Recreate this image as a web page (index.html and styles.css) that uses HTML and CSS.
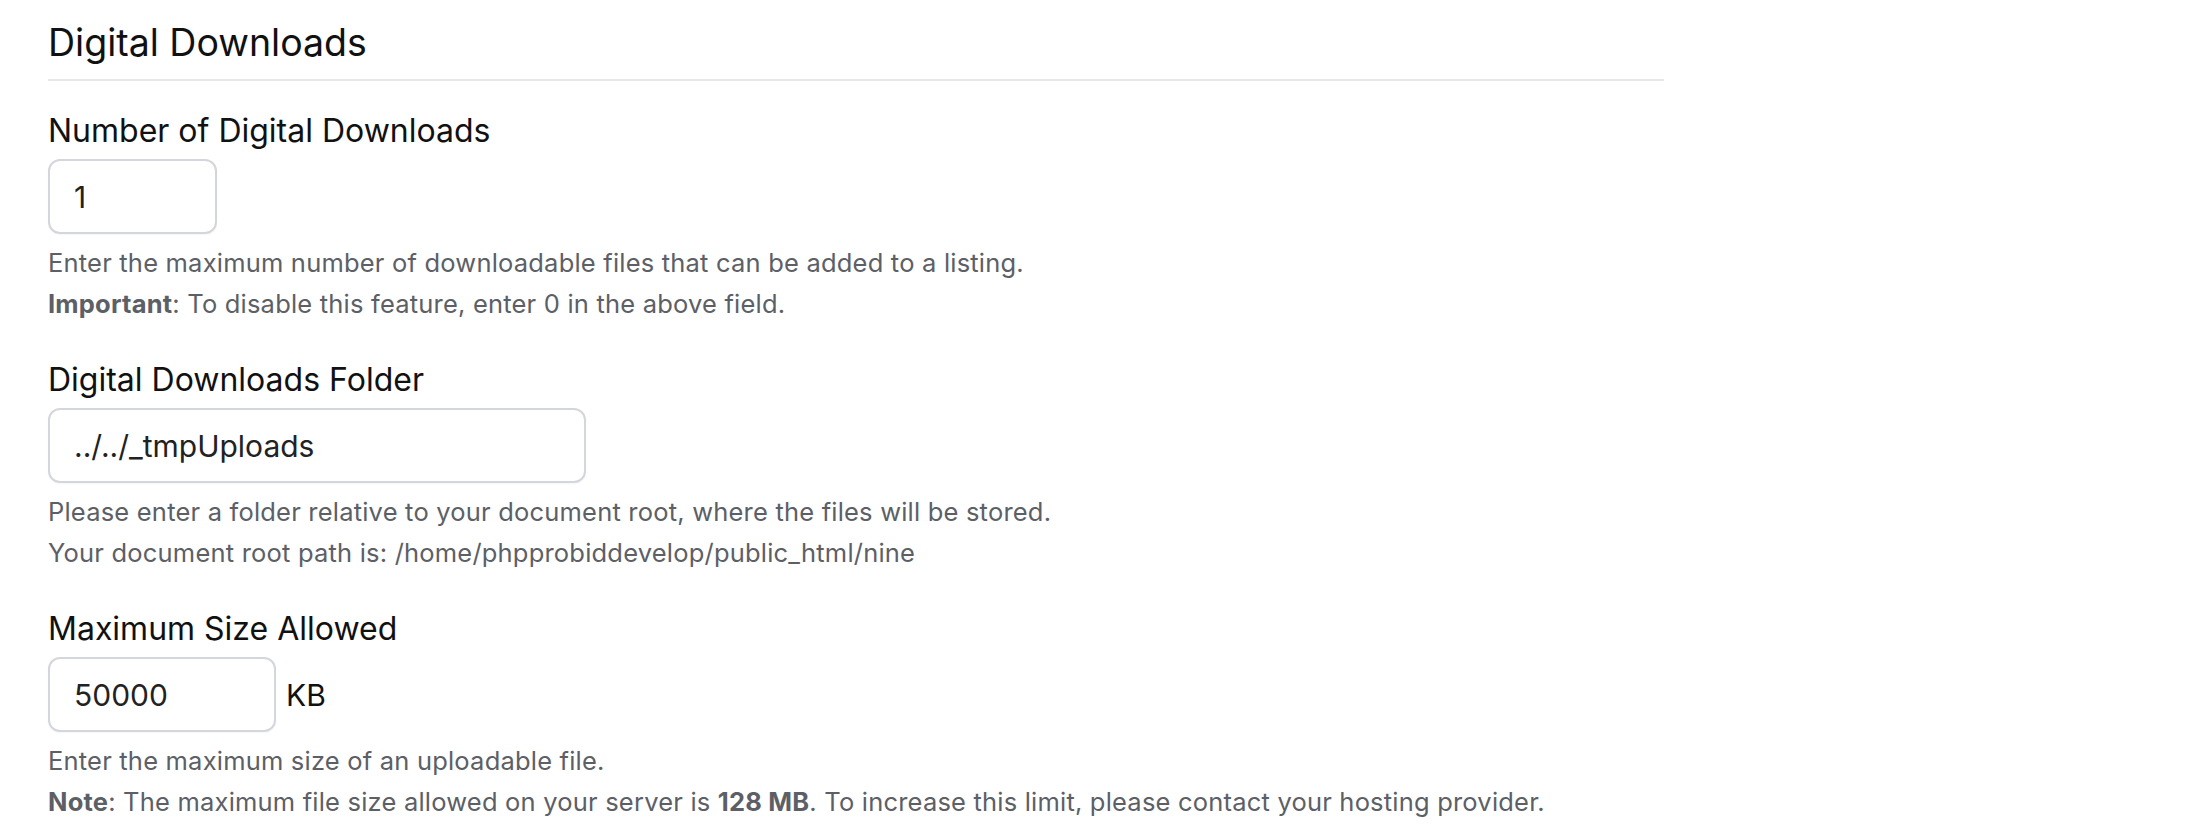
FILE: index.html
```html
<!DOCTYPE html>
<html lang="en">
<head>
<meta charset="utf-8">
<title>Digital Downloads</title>
<link rel="stylesheet" href="styles.css">
</head>
<body>
<div class="page">
  <h2 class="section-title">Digital Downloads</h2>

  <div class="field">
    <label class="field-label" for="dd-num">Number of Digital Downloads</label>
    <div class="field-control">
      <input class="text-input input-sm" id="dd-num" type="text" value="1">
    </div>
    <div class="field-help">
      <p>Enter the maximum number of downloadable files that can be added to a listing.</p>
      <p><strong>Important</strong>: To disable this feature, enter 0 in the above field.</p>
    </div>
  </div>

  <div class="field">
    <label class="field-label" for="dd-folder">Digital Downloads Folder</label>
    <div class="field-control">
      <input class="text-input input-lg" id="dd-folder" type="text" value="../../_tmpUploads">
    </div>
    <div class="field-help">
      <p>Please enter a folder relative to your document root, where the files will be stored.</p>
      <p>Your document root path is: /home/phpprobiddevelop/public_html/nine</p>
    </div>
  </div>

  <div class="field">
    <label class="field-label" for="dd-size">Maximum Size Allowed</label>
    <div class="field-control">
      <input class="text-input input-md" id="dd-size" type="text" value="50000">
      <span class="unit">KB</span>
    </div>
    <div class="field-help">
      <p>Enter the maximum size of an uploadable file.</p>
      <p><strong>Note</strong>: The maximum file size allowed on your server is <strong>128 MB</strong>. To increase this limit, please contact your hosting provider.</p>
    </div>
  </div>
</div>
</body>
</html>
```

FILE: styles.css
```css
* { box-sizing: border-box; }

html, body {
  margin: 0;
  padding: 0;
  background: #ffffff;
}

body {
  font-family: Inter, "Noto Sans", "Liberation Sans", sans-serif;
  color: #111111;
}

.page {
  width: 1664px;
  padding: 19px 0 0 48px;
  display: flex;
  flex-direction: column;
}

.section-title {
  margin: 0;
  font-size: 37.5px;
  font-weight: 400;
  line-height: 48px;
  padding-bottom: 12px;
  border-bottom: 2px solid #e6e7eb;
  color: #111111;
}

.field {
  display: flex;
  flex-direction: column;
  margin-top: 30px;
}

.field + .field {
  margin-top: 36px;
}

.field-label {
  font-size: 32px;
  line-height: 40px;
  color: #111111;
}

.field-control {
  display: flex;
  align-items: center;
  gap: 10px;
  margin-top: 8px;
}

.text-input {
  height: 75px;
  border: 2px solid #d3d6dc;
  border-radius: 12px;
  padding: 0 24px;
  font-family: inherit;
  font-size: 30px;
  color: #222222;
  background: #ffffff;
  outline: none;
  box-shadow: 0 1px 2px rgba(0, 0, 0, 0.04);
}

.input-sm { width: 169px; }
.input-md { width: 228px; }
.input-lg { width: 538px; }

.unit {
  font-size: 30px;
  color: #111111;
}

.field-help {
  margin-top: 8px;
  font-size: 25.5px;
  letter-spacing: 0.2px;
  line-height: 41px;
  color: #5c6066;
}

.field-help p {
  margin: 0;
}

.field-help strong {
  font-weight: 700;
}
```
